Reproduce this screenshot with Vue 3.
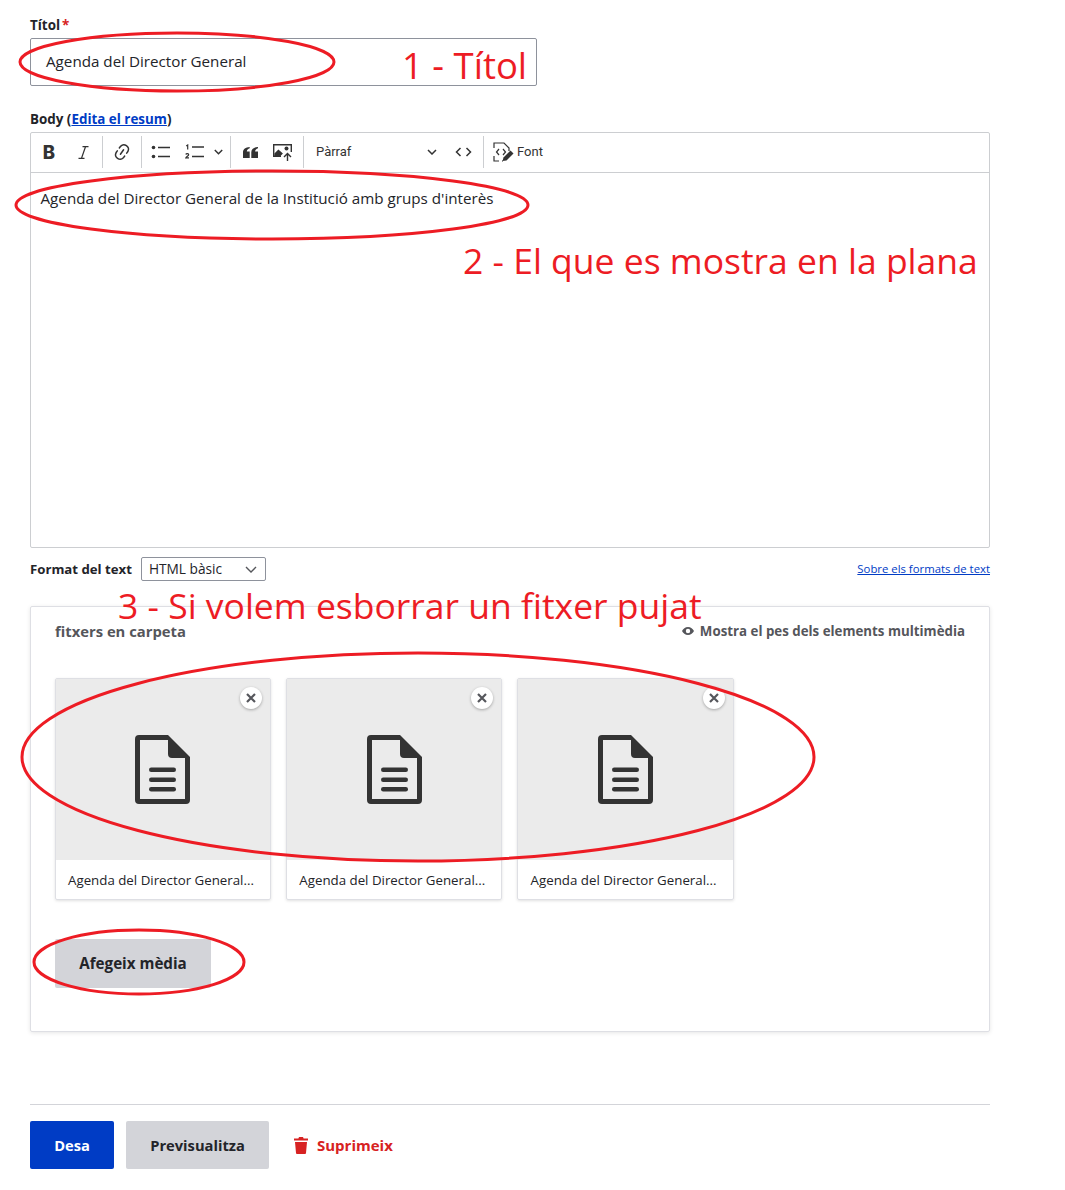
<script setup>
const cards = [1, 2, 3]
</script>

<template>
  <div class="page">
    <div class="field title-field">
      <label class="label">Títol<span class="req">*</span></label>
      <div class="input">Agenda del Director General</div>
    </div>

    <div class="field body-field">
      <label class="label">Body (<a class="summary">Edita el resum</a>)</label>
      <div class="editor">
        <div class="toolbar">
          <span class="tb"><b class="bold-i">B</b></span>
          <span class="tb"><svg width="11" height="13" viewBox="0 0 11 13"><path d="M4.500.7h6M.5 12.300h6M7.500.7l-4 11.600" fill="none" stroke="#333" stroke-width="1.200"/></svg></span>
          <i class="sep"></i>
          <span class="tb"><svg width="20" height="20" viewBox="0 0 20 20"><path d="m11.077 15 .991-1.416a.75.75 0 1 1 1.229.86l-1.148 1.64a.748.748 0 0 1-.217.206 5.251 5.251 0 0 1-8.503-5.955.741.741 0 0 1 .12-.274l1.147-1.639a.75.75 0 1 1 1.228.86L4.933 10.700l.006.003a3.750 3.750 0 0 0 6.132 4.294l.006.004zm5.494-5.335a.748.748 0 0 1-.12.274l-1.147 1.639a.75.75 0 1 1-1.228-.86l.86-1.230a3.750 3.750 0 0 0-6.144-4.301l-.86 1.229a.75.75 0 0 1-1.229-.86l1.148-1.640a.748.748 0 0 1 .217-.206 5.251 5.251 0 0 1 8.503 5.955zm-4.563-2.532a.75.75 0 0 1 .184 1.045l-3.155 4.505a.75.75 0 1 1-1.229-.86l3.155-4.506a.75.75 0 0 1 1.045-.184z" fill="#333"/></svg></span>
          <i class="sep"></i>
          <span class="tb"><svg width="20" height="14" viewBox="0 0 20 14"><circle cx="2.500" cy="2.500" r="1.800" fill="#333"/><circle cx="2.500" cy="11.500" r="1.800" fill="#333"/><path d="M7 2.500h12M7 11.500h12" stroke="#333" stroke-width="1.300"/></svg></span>
          <span class="tb"><svg width="20" height="16" viewBox="0 0 20 16"><path d="M7 3h12M7 12.500h12" stroke="#333" stroke-width="1.300"/><path d="M1.200 2l1.500-1v4.500" fill="none" stroke="#333" stroke-width="1.200"/><path d="M.8 10.500c.4-1.100 2.900-1.100 2.900.3 0 1.100-2.400 1.700-2.900 3.100h3.200" fill="none" stroke="#333" stroke-width="1.200"/></svg></span>
          <span class="tb narrow"><svg width="9" height="6" viewBox="0 0 9 6"><path d="M.8 1l3.700 3.700L8.200 1" fill="none" stroke="#333" stroke-width="1.500"/></svg></span>
          <i class="sep"></i>
          <span class="tb"><svg width="15" height="11" viewBox="0 0 15 11"><path d="M6.700 0v1.300C5 1.700 4 2.900 3.800 4.500h2.900V11H0V5.200C0 2.200 2.600.2 6.700 0zM15 0v1.300c-1.700.4-2.700 1.600-2.900 3.200H15V11H8.300V5.200C8.300 2.200 10.900.2 15 0z" fill="#333"/></svg></span>
          <span class="tb img"><svg width="21" height="17" viewBox="0 0 21 17"><path d="M0 0h19v8h-1.400V1.400H1.400v10H8V13H0z" fill="#333"/><path d="M1.400 11.400V9.500l4-4 4.500 4-2.400 2.600v.9H1.400z" fill="#333"/><circle cx="13.500" cy="4.500" r="2" fill="#333"/><path d="M14.500 17V9.500M11 13l3.500-3.500L18 13" fill="none" stroke="#333" stroke-width="1.400"/></svg></span>
          <i class="sep"></i>
          <span class="heading"><span class="heading-text">Pàrraf</span><svg width="10" height="6" viewBox="0 0 10 6"><path d="M1 1l4 4 4-4" fill="none" stroke="#333" stroke-width="1.500"/></svg></span>
          <span class="tb code"><svg width="17" height="10" viewBox="0 0 17 10"><path d="M5.500 1L1.500 5l4 4M11.500 1l4 4-4 4" fill="none" stroke="#333" stroke-width="1.500"/></svg></span>
          <i class="sep"></i>
          <span class="source"><svg width="21" height="20" viewBox="0 0 21 20"><g fill="none" stroke="#333" stroke-width="1.200"><path d="M1 6V1h10l5 5v3M1 14v5h5M9 19h1"/><path d="M6 7L3.500 10 6 13M10 7l2.500 3L10 13"/></g><path d="M9.500 19l1-3.500 7-7 3 3-7 7z" fill="#333"/></svg><span class="source-text">Font</span></span>
        </div>
        <div class="content">Agenda del Director General de la Institució amb grups d'interès</div>
      </div>
    </div>

    <div class="format-row">
      <span class="format-label">Format del text</span>
      <div class="select"><span class="select-text">HTML bàsic</span><svg width="12" height="7" viewBox="0 0 12 7"><path d="M1 1l5 5 5-5" fill="none" stroke="#55565b" stroke-width="1.400"/></svg></div>
      <a class="about">Sobre els formats de text</a>
    </div>

    <section class="panel">
      <header class="panel-head">
        <span class="panel-title">fitxers en carpeta</span>
        <span class="weight"><svg width="12" height="8" viewBox="0 0 12 8"><path fill-rule="evenodd" d="M6 0c2.800 0 4.900 1.800 6 4-1.100 2.200-3.200 4-6 4S1.100 6.200 0 4c1.100-2.200 3.200-4 6-4zm0 1.800a2.200 2.200 0 1 0 0 4.400 2.200 2.200 0 0 0 0-4.400z" fill="#55565b"/></svg>Mostra el pes dels elements multimèdia</span>
      </header>
      <div class="cards">
        <article v-for="c in cards" :key="c" class="card">
          <div class="thumb">
            <svg width="55" height="69" viewBox="0 0 55 69"><path fill-rule="evenodd" d="M4 0h29l22 22v43a4 4 0 0 1-4 4H4a4 4 0 0 1-4-4V4a4 4 0 0 1 4-4zM5 5v59h45V23H37a4 4 0 0 1-4-4V5z" fill="#333"/><rect x="14" y="32.500" width="27" height="4.500" rx="2.200" fill="#333"/><rect x="14" y="42.500" width="27" height="4.500" rx="2.200" fill="#333"/><rect x="14" y="52" width="27" height="4.500" rx="2.200" fill="#333"/></svg>
            <span class="remove"><svg width="10" height="10" viewBox="0 0 10 10"><path d="M1 1l8 8M9 1l-8 8" stroke="#55565b" stroke-width="2.200"/></svg></span>
          </div>
          <div class="name">Agenda del Director General...</div>
        </article>
      </div>
      <button class="btn add">Afegeix mèdia</button>
    </section>

    <footer class="actions">
      <button class="btn primary">Desa</button>
      <button class="btn preview">Previsualitza</button>
      <a class="delete"><svg width="14" height="17" viewBox="0 0 14 17"><path d="M5 0h4l.6 1.500H14v2H0v-2h4.400zM1 5h12l-1 11a1 1 0 0 1-1 1H3a1 1 0 0 1-1-1z" fill="#d72222"/></svg>Suprimeix</a>
    </footer>

    <svg class="marks" width="1065" height="1190" viewBox="0 0 1065 1190">
      <g fill="none" stroke="#ed1c24" stroke-width="3">
        <ellipse cx="177" cy="62" rx="157" ry="29"/>
        <ellipse cx="272" cy="205" rx="256" ry="34"/>
        <ellipse cx="418" cy="757" rx="396" ry="104"/>
        <ellipse cx="139" cy="962" rx="105" ry="32"/>
      </g>
    </svg>
    <span class="note n1">1 - Títol</span>
    <span class="note n2">2 - El que es mostra en la plana</span>
    <span class="note n3">3 - Si volem esborrar un fitxer pujat</span>
  </div>
</template>

<style>
html, body { margin: 0; background: #fff; }
</style>

<style scoped>
.page {
  position: relative;
  width: 1065px;
  height: 1190px;
  box-sizing: border-box;
  padding: 16px 75px 0 30px;
  font-family: "Open Sans", "Noto Sans", sans-serif;
  color: #232429;
  overflow: hidden;
}
.label { display: block; height: 22px; font-size: 13.400px; line-height: 18px; font-weight: 700; }
.req { color: #d72222; margin-left: 2px; }
.summary { color: #003cc5; text-decoration: underline; }
.input {
  box-sizing: border-box;
  width: 507px;
  height: 48px;
  border: 1px solid #8e929c;
  border-radius: 2px;
  padding: 0 15px;
  font-size: 15.200px;
  line-height: 45px;
}
.body-field { margin-top: 24px; }
.editor { border: 1px solid #ccced1; border-radius: 2px; height: 416px; box-sizing: border-box; }
.toolbar { display: flex; align-items: center; height: 40px; border-bottom: 1px solid #ccced1; padding: 0 0 1px 1px; box-sizing: border-box; }
.tb { width: 34px; height: 26px; display: flex; align-items: center; justify-content: center; flex: none; }
.tb.narrow { width: 16px; padding-right: 3px; box-sizing: border-box; }
.tb.img { width: 32px; margin-right: 2px; }
.tb.code { margin-right: 1px; }
.bold-i { font-family: Inter, sans-serif; font-size: 18.500px; font-weight: 800; color: #333; }
.sep { display: block; width: 1px; height: 32px; margin: 0 2px; background: #ccced1; flex: none; }
.heading { width: 140px; height: 26px; display: flex; align-items: center; justify-content: space-between; box-sizing: border-box; padding: 0 9px 0 10px; font-family: Roboto, sans-serif; font-size: 13px; color: #333; flex: none; }
.heading-text { margin-top: -2px; }
.source { display: flex; align-items: center; gap: 3px; margin-left: 7px; font-family: Roboto, sans-serif; font-size: 13px; color: #333; }
.source-text { margin-top: -2px; }
.content { padding: 15px 9.500px 0; font-size: 15.200px; line-height: 20px; }

.format-row { display: flex; align-items: center; height: 24px; margin-top: 9px; }
.format-label { font-size: 13.200px; font-weight: 700; margin-right: 9px; }
.select { box-sizing: border-box; width: 125px; height: 24px; border: 1px solid #8e929c; border-radius: 2px; display: flex; align-items: center; justify-content: space-between; padding: 0 8px 0 7px; font-size: 13.700px; }
.select-text { margin-top: -2px; }
.about { margin-left: auto; margin-top: -1px; font-size: 11.350px; color: #003cc5; text-decoration: underline; }

.panel {
  box-sizing: border-box;
  height: 426px;
  margin-top: 25px;
  border: 1px solid #dedfe4;
  border-radius: 2px;
  box-shadow: 0 1px 4px rgba(0, 0, 0, .1);
  padding: 14px 24px 0;
}
.panel-head { display: flex; justify-content: space-between; align-items: center; height: 20px; font-size: 13.300px; font-weight: 700; color: #55565b; }
.panel-title { font-size: 14.800px; margin-top: -1px; }
.weight { display: flex; align-items: center; gap: 6px; }
.cards { display: flex; gap: 14.700px; margin: 37px 0 0 -.5px; }
.card { box-sizing: border-box; width: 216.600px; height: 222px; border: 1px solid #dedfe4; border-radius: 2px; box-shadow: 0 1px 3px rgba(0, 0, 0, .12); }
.thumb { position: relative; height: 181px; background: #ebebeb; display: flex; align-items: center; justify-content: center; }
.remove { position: absolute; top: 8px; right: 8px; width: 22px; height: 22px; border-radius: 50%; background: #fff; box-shadow: 0 1px 3px rgba(0, 0, 0, .3); display: flex; align-items: center; justify-content: center; }
.name { padding: 0 12.500px; font-size: 13.300px; line-height: 40px; white-space: nowrap; }
.btn { font-family: inherit; font-size: 14.700px; font-weight: 700; border: 0; border-radius: 2px; background: #d3d4d9; color: #232429; height: 48px; padding: 0; }
.add { display: block; margin-top: 39px; width: 156px; height: 49px; padding-bottom: 2px; font-size: 15.200px; }
.actions { display: flex; align-items: center; gap: 12px; margin-top: 72px; padding-top: 16px; border-top: 1px solid #d3d4d9; }
.primary { background: #003cc5; color: #fff; width: 84px; }
.preview { width: 143px; }
.delete { display: flex; align-items: center; gap: 9px; margin-left: 13px; font-size: 15px; font-weight: 700; color: #d72222; }

.marks { position: absolute; left: 0; top: 0; pointer-events: none; }
.note { position: absolute; color: #ed1c24; font-family: "Open Sans", sans-serif; font-size: 35.500px; line-height: 44px; white-space: nowrap; }
.n1 { left: 402px; top: 43px; font-size: 36.500px; }
.n2 { left: 463px; top: 238px; }
.n3 { left: 118px; top: 583px; }
</style>
